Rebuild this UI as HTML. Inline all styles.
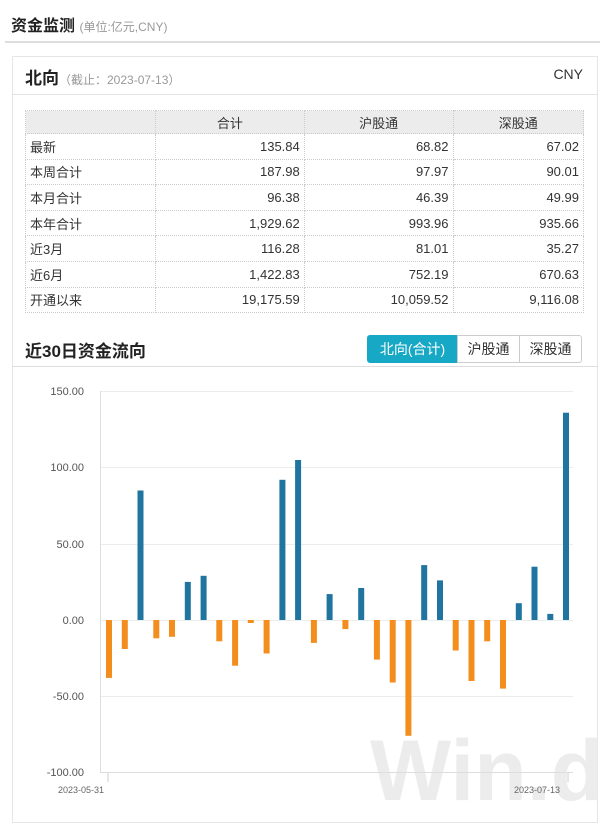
<!DOCTYPE html>
<html><head><meta charset="utf-8"><style>
*{margin:0;padding:0;box-sizing:border-box}
body{width:600px;height:823px;background:#fff;font-family:"Liberation Sans","Noto Sans CJK SC",sans-serif;position:relative;overflow:hidden;color:#333}
.abs{position:absolute}
table{border-collapse:collapse;position:absolute;left:25px;top:110px;width:559px;font-size:13px}
td{border:1px dotted #ccc;height:25.6px;padding:0 4px;text-align:right}
td:first-child{text-align:left}
tr.h td{background:#ececec;text-align:center;height:23px}
.btn{position:absolute;top:335px;height:28px;font-size:14px;line-height:27px;text-align:center;border:1px solid #ccc}
</style></head><body>
<div class="abs" style="left:11px;top:12px;font-size:16px;font-weight:bold;color:#222">资金监测 <span style="font-size:12px;font-weight:normal;color:#999">(单位:亿元,CNY)</span></div>
<div class="abs" style="left:5px;top:41px;width:595px;height:2px;background:#ddd"></div>
<div class="abs" style="left:12px;top:56px;width:586px;height:767px;border:1px solid #e6e6e6"></div>
<div class="abs" style="left:25px;top:64px;font-size:17px;font-weight:bold;color:#222">北向<span style="font-size:12px;font-weight:normal;color:#999">（截止：2023-07-13）</span></div>
<div class="abs" style="right:17px;top:66px;font-size:14px;color:#333">CNY</div>
<div class="abs" style="left:12px;top:94px;width:586px;height:1px;background:#e2e2e2"></div>
<table>
<tr class="h"><td style="width:130px"></td><td>合计</td><td>沪股通</td><td>深股通</td></tr>
<tr><td>最新</td><td>135.84</td><td>68.82</td><td>67.02</td></tr>
<tr><td>本周合计</td><td>187.98</td><td>97.97</td><td>90.01</td></tr>
<tr><td>本月合计</td><td>96.38</td><td>46.39</td><td>49.99</td></tr>
<tr><td>本年合计</td><td>1,929.62</td><td>993.96</td><td>935.66</td></tr>
<tr><td>近3月</td><td>116.28</td><td>81.01</td><td>35.27</td></tr>
<tr><td>近6月</td><td>1,422.83</td><td>752.19</td><td>670.63</td></tr>
<tr><td>开通以来</td><td>19,175.59</td><td>10,059.52</td><td>9,116.08</td></tr>
</table>
<div class="abs" style="left:25px;top:337px;font-size:17px;font-weight:bold;color:#222">近30日资金流向</div>
<div class="btn" style="left:367px;width:91px;background:#17a8c6;color:#fff;border-color:#17a8c6;border-radius:3px 0 0 3px">北向(合计)</div>
<div class="btn" style="left:457px;width:63px;color:#333">沪股通</div>
<div class="btn" style="left:519px;width:63px;color:#333;border-radius:0 3px 3px 0">深股通</div>
<div class="abs" style="left:12px;top:366px;width:586px;height:1px;background:#ddd"></div>
<div class="abs" style="left:370px;top:730px;width:230px;height:80px;overflow:hidden"><div style="font-size:86px;font-weight:bold;color:#ececec;line-height:1;margin-top:-2px;white-space:nowrap">Win.d</div></div>
<svg class="abs" style="left:0;top:0" width="600" height="823">
<g font-size="11" fill="#555" text-anchor="end" font-family="Liberation Sans">
<text x="84" y="395">150.00</text><text x="84" y="471">100.00</text><text x="84" y="548">50.00</text><text x="84" y="624">0.00</text><text x="84" y="700">-50.00</text><text x="84" y="776">-100.00</text>
</g>
<g stroke="#ececec"><line x1="101" x2="573" y1="391.5" y2="391.5"/><line x1="101" x2="573" y1="467.5" y2="467.5"/><line x1="101" x2="573" y1="544.5" y2="544.5"/><line x1="101" x2="573" y1="620.5" y2="620.5"/><line x1="101" x2="573" y1="696.5" y2="696.5"/></g>
<line x1="100.5" x2="100.5" y1="391" y2="773" stroke="#ddd"/>
<line x1="101" x2="573" y1="772.5" y2="772.5" stroke="#ddd"/>
<line x1="108" x2="108" y1="773" y2="782" stroke="#ccc"/><line x1="568" x2="568" y1="773" y2="782" stroke="#ccc"/>
<g font-size="9" fill="#666" font-family="Liberation Sans"><text x="58" y="793">2023-05-31</text><text x="514" y="793">2023-07-13</text></g>
<g id="bars"></g>
</svg>
<script>
var v=[-38,-19,85,-12,-11,25,29,-14,-30,-2,-22,92,105,-15,17,-6,21,-26,-41,-76,36,26,-20,-40,-14,-45,11,35,4,136];
var g=document.getElementById('bars'),s='';
for(var i=0;i<v.length;i++){var x=106+i*15.76,h=Math.abs(v[i])*1.524,y=v[i]>0?620-h:620;
s+='<rect x="'+x.toFixed(1)+'" y="'+y.toFixed(1)+'" width="6" height="'+h.toFixed(1)+'" fill="'+(v[i]>0?'#1f74a0':'#f28d1e')+'"/>';}
g.innerHTML=s;
</script>
</body></html>
